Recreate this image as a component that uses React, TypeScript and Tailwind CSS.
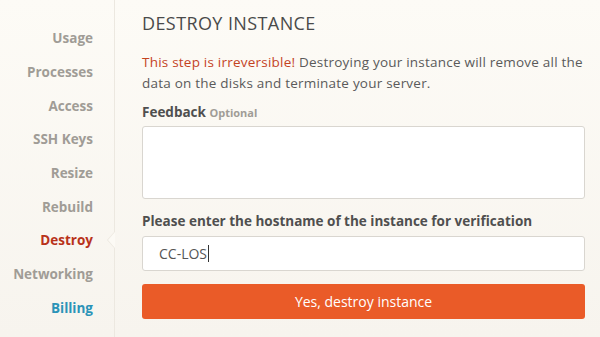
import React from 'react';

const navItems = [
  { name: 'Usage', color: 'text-[#a09c96]' },
  { name: 'Processes', color: 'text-[#a09c96]' },
  { name: 'Access', color: 'text-[#a09c96]' },
  { name: 'SSH Keys', color: 'text-[#a09c96]' },
  { name: 'Resize', color: 'text-[#a09c96]' },
  { name: 'Rebuild', color: 'text-[#a09c96]' },
  { name: 'Destroy', color: 'text-[#b8321a]', active: true },
  { name: 'Networking', color: 'text-[#a09c96]' },
  { name: 'Billing', color: 'text-[#2b93b8]' },
];

export default function App() {
  return (
    <div
      className="w-[600px] h-[337px] overflow-hidden flex bg-gradient-to-b from-[#fdfbf6] to-[#f7f4ee] text-[#555]"
      style={{ fontFamily: '"Open Sans", "DejaVu Sans", sans-serif' }}
    >
      {/* sidebar */}
      <div className="w-[115px] shrink-0 border-r border-[#ece8e0] flex flex-col items-end pr-[21px] pt-[28px] gap-[12.65px]">
        {navItems.map((item) => (
          <div key={item.name} className="relative h-[21px] flex items-center">
            <span className={`text-[13.5px] font-bold ${item.color}`}>{item.name}</span>
            {item.active && (
              <span className="absolute right-[-22px] top-[1px] w-0 h-0 border-y-[9px] border-y-transparent border-r-[8px] border-r-[#ece8e0]">
                <span className="absolute left-[1px] top-[-8px] w-0 h-0 border-y-[8px] border-y-transparent border-r-[7px] border-r-[#fcfaf5]" />
              </span>
            )}
          </div>
        ))}
      </div>

      {/* main */}
      <div className="flex-1 pl-[27px] pr-[15px] pt-[10px]">
        <h1 className="text-[18px] text-[#4a4a4a] tracking-[0.4px]">DESTROY INSTANCE</h1>
        <p className="mt-[15px] text-[13.5px] leading-[21px] tracking-[0.22px] text-[#5a5a5a]">
          <span className="text-[#c4431f]">This step is irreversible!</span> Destroying your instance will remove all the
          data on the disks and terminate your server.
        </p>
        <div className="mt-[8px] text-[13.5px] font-bold text-[#4f4f4f]">
          Feedback <span className="text-[11px] text-[#a09c96]">Optional</span>
        </div>
        <div className="mt-[4px] h-[73px] bg-white border border-[#d9d6d0] rounded-[3px]" />
        <div className="mt-[12px] text-[13.5px] font-bold text-[#4f4f4f]">
          Please enter the hostname of the instance for verification
        </div>
        <div className="mt-[4px] h-[35px] bg-white border border-[#d9d6d0] rounded-[3px] flex items-center pl-[16px] text-[14px] text-[#555]">
          CC-LOS<span className="ml-[1px] w-px h-[17px] bg-[#333]" />
        </div>
        <button className="mt-[13px] w-full h-[35px] bg-[#ea5b28] rounded-[3px] text-white text-[14px]">
          Yes, destroy instance
        </button>
      </div>
    </div>
  );
}
